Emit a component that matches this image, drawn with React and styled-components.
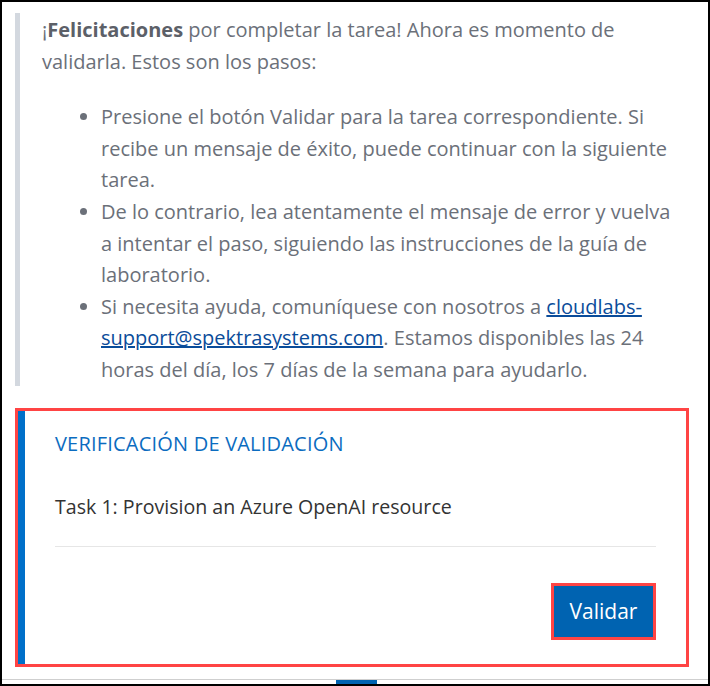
import React from "react";
import styled, { createGlobalStyle } from "styled-components";

const GlobalStyle = createGlobalStyle`
  html, body {
    margin: 0;
    padding: 0;
    background: #fff;
  }
  * {
    box-sizing: border-box;
  }
`;

const Frame = styled.div`
  width: 710px;
  height: 686px;
  border: 2px solid #000;
  display: flex;
  flex-direction: column;
  padding-top: 11px;
  font-family: "Open Sans", "Noto Sans", sans-serif;
  overflow: hidden;
`;

const Quote = styled.div`
  margin-left: 13px;
  margin-right: 14px;
  border-left: 5px solid #d3d8df;
  padding: 1px 20px 0 22px;
  color: #6b7079;
  font-size: 20px;
  line-height: 31.6px;
`;

const Intro = styled.p`
  margin: 0 0 24px;
`;

const Strong = styled.strong`
  font-weight: 700;
  color: #5c6068;
`;

const Steps = styled.ul`
  margin: 0;
  padding-left: 59px;
  list-style: disc;

  li::marker {
    color: #6b7079;
  }
`;

const MailLink = styled.a`
  color: #0a4c9a;
  text-decoration: underline;
`;

const Card = styled.div`
  margin: 22px 0 0 13px;
  width: 674px;
  height: 262px;
  border: 3px solid #ff4444;
  display: flex;
`;

const CardInner = styled.div`
  flex: 1;
  border-left: 7px solid #0070c9;
  padding: 21px 30px 0 30px;
  display: flex;
  flex-direction: column;
`;

const CardTitle = styled.div`
  color: #0b6cc0;
  font-size: 20px;
  letter-spacing: 0.2px;
  line-height: 24px;
`;

const TaskName = styled.div`
  margin-top: 39px;
  color: #333;
  font-size: 19.6px;
  line-height: 24px;
`;

const Divider = styled.hr`
  margin: 27px 0 0;
  border: 0;
  border-top: 1px solid #e6e6e6;
`;

const ButtonRow = styled.div`
  display: flex;
  justify-content: flex-end;
  margin-top: 36px;
`;

const Highlight = styled.div`
  border: 3px solid #ff4444;
`;

const ValidateButton = styled.button`
  width: 99px;
  height: 51px;
  border: none;
  background: #0063b1;
  color: #fff;
  font-family: "Open Sans", "Noto Sans", sans-serif;
  font-size: 21px;
  padding: 0;
  cursor: pointer;
`;

const Footer = styled.div`
  margin-top: 12px;
  border-top: 1px solid #cfcfcf;
  display: flex;
  justify-content: center;
`;

const Indicator = styled.div`
  width: 41px;
  height: 4px;
  margin-left: 2px;
  background: #0063b1;
`;

export default function App() {
  return (
    <>
      <GlobalStyle />
      <Frame>
        <Quote>
          <Intro>
            ¡<Strong>Felicitaciones</Strong> por completar la tarea! Ahora es momento de validarla. Estos son los pasos:
          </Intro>
          <Steps>
            <li>
              Presione el botón Validar para la tarea correspondiente. Si recibe un mensaje de éxito, puede continuar con la siguiente tarea.
            </li>
            <li>
              De lo contrario, lea atentamente el mensaje de error y vuelva a intentar el paso, siguiendo las instrucciones de la guía de laboratorio.
            </li>
            <li>
              Si necesita ayuda, comuníquese con nosotros a{" "}
              <MailLink href="mailto:cloudlabs-support@spektrasystems.com">cloudlabs-support@spektrasystems.com</MailLink>. Estamos disponibles las 24 horas del día, los 7 días de la semana para ayudarlo.
            </li>
          </Steps>
        </Quote>
        <Card>
          <CardInner>
            <CardTitle>VERIFICACIÓN DE VALIDACIÓN</CardTitle>
            <TaskName>Task 1: Provision an Azure OpenAI resource</TaskName>
            <Divider />
            <ButtonRow>
              <Highlight>
                <ValidateButton>Validar</ValidateButton>
              </Highlight>
            </ButtonRow>
          </CardInner>
        </Card>
        <Footer>
          <Indicator />
        </Footer>
      </Frame>
    </>
  );
}
